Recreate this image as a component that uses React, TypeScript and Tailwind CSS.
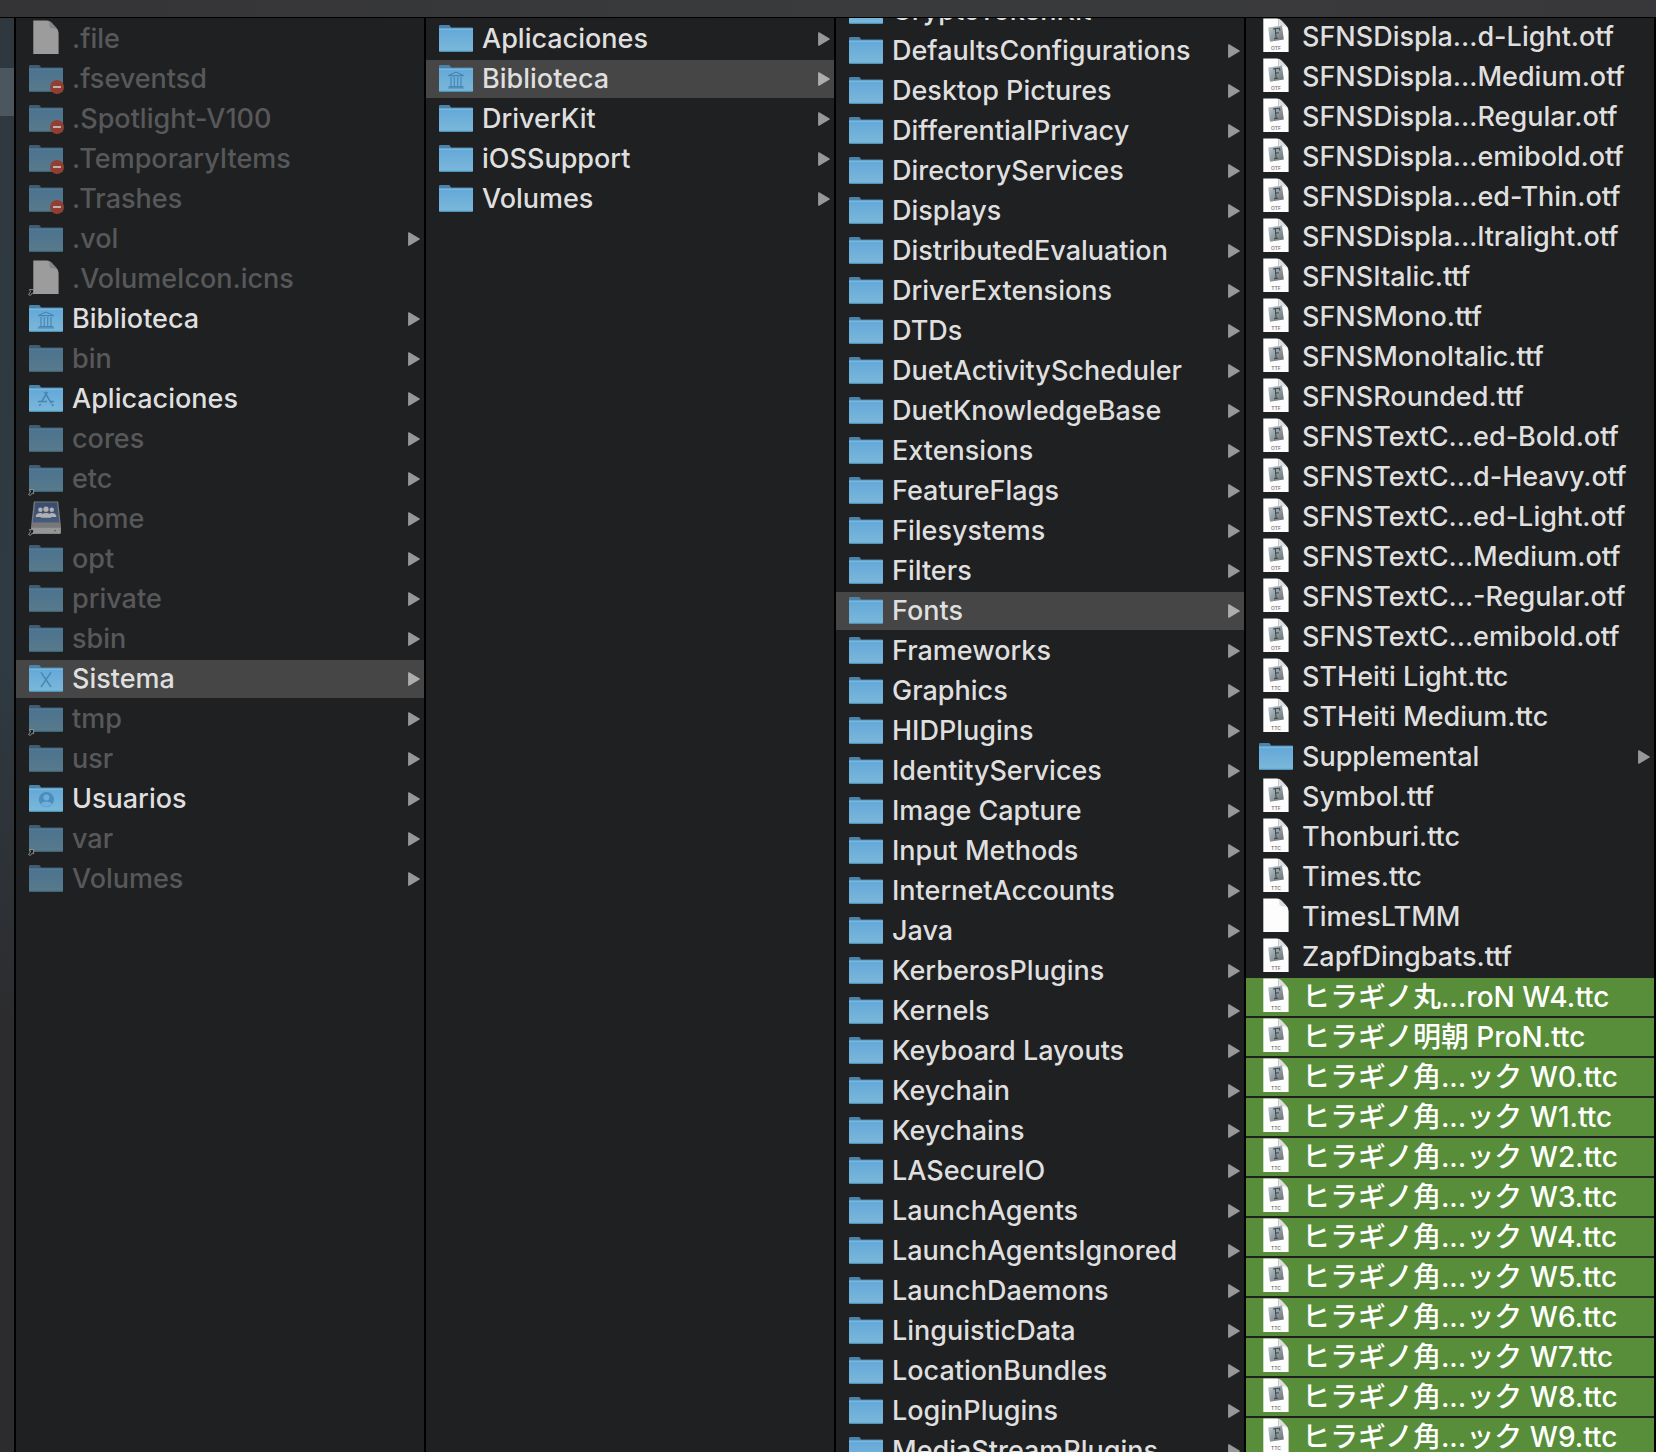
import React from "react";

type Kind =
  | "folder"
  | "library"
  | "apps"
  | "system"
  | "users"
  | "network"
  | "doc"
  | "otf"
  | "ttf"
  | "ttc";

type Item = {
  name: string;
  kind?: Kind;
  dim?: boolean;
  locked?: boolean;
  alias?: boolean;
  open?: boolean;
  tagged?: boolean;
};

const rootItems: Item[] = [
  { name: ".file", kind: "doc", dim: true },
  { name: ".fseventsd", dim: true, locked: true },
  { name: ".Spotlight-V100", dim: true, locked: true },
  { name: ".TemporaryItems", dim: true, locked: true },
  { name: ".Trashes", dim: true, locked: true },
  { name: ".vol", dim: true },
  { name: ".VolumeIcon.icns", kind: "doc", dim: true, alias: true },
  { name: "Biblioteca", kind: "library" },
  { name: "bin", dim: true },
  { name: "Aplicaciones", kind: "apps" },
  { name: "cores", dim: true },
  { name: "etc", dim: true, alias: true },
  { name: "home", kind: "network", dim: true, alias: true },
  { name: "opt", dim: true },
  { name: "private", dim: true },
  { name: "sbin", dim: true },
  { name: "Sistema", kind: "system", open: true },
  { name: "tmp", dim: true, alias: true },
  { name: "usr", dim: true },
  { name: "Usuarios", kind: "users" },
  { name: "var", dim: true, alias: true },
  { name: "Volumes", dim: true },
];

const systemItems: Item[] = [
  { name: "Aplicaciones" },
  { name: "Biblioteca", kind: "library", open: true },
  { name: "DriverKit" },
  { name: "iOSSupport" },
  { name: "Volumes" },
];

const libraryItems: Item[] = [
  "CryptoTokenKit",
  "DefaultsConfigurations",
  "Desktop Pictures",
  "DifferentialPrivacy",
  "DirectoryServices",
  "Displays",
  "DistributedEvaluation",
  "DriverExtensions",
  "DTDs",
  "DuetActivityScheduler",
  "DuetKnowledgeBase",
  "Extensions",
  "FeatureFlags",
  "Filesystems",
  "Filters",
  "Fonts",
  "Frameworks",
  "Graphics",
  "HIDPlugins",
  "IdentityServices",
  "Image Capture",
  "Input Methods",
  "InternetAccounts",
  "Java",
  "KerberosPlugins",
  "Kernels",
  "Keyboard Layouts",
  "Keychain",
  "Keychains",
  "LASecureIO",
  "LaunchAgents",
  "LaunchAgentsIgnored",
  "LaunchDaemons",
  "LinguisticData",
  "LocationBundles",
  "LoginPlugins",
  "MediaStreamPlugins",
].map((name) => ({ name, open: name === "Fonts" }));

const fontItems: Item[] = [
  { name: "SFNSDispla...d-Light.otf", kind: "otf" },
  { name: "SFNSDispla...Medium.otf", kind: "otf" },
  { name: "SFNSDispla...Regular.otf", kind: "otf" },
  { name: "SFNSDispla...emibold.otf", kind: "otf" },
  { name: "SFNSDispla...ed-Thin.otf", kind: "otf" },
  { name: "SFNSDispla...ltralight.otf", kind: "otf" },
  { name: "SFNSItalic.ttf", kind: "ttf" },
  { name: "SFNSMono.ttf", kind: "ttf" },
  { name: "SFNSMonoItalic.ttf", kind: "ttf" },
  { name: "SFNSRounded.ttf", kind: "ttf" },
  { name: "SFNSTextC...ed-Bold.otf", kind: "otf" },
  { name: "SFNSTextC...d-Heavy.otf", kind: "otf" },
  { name: "SFNSTextC...ed-Light.otf", kind: "otf" },
  { name: "SFNSTextC...Medium.otf", kind: "otf" },
  { name: "SFNSTextC...-Regular.otf", kind: "otf" },
  { name: "SFNSTextC...emibold.otf", kind: "otf" },
  { name: "STHeiti Light.ttc", kind: "ttc" },
  { name: "STHeiti Medium.ttc", kind: "ttc" },
  { name: "Supplemental" },
  { name: "Symbol.ttf", kind: "ttf" },
  { name: "Thonburi.ttc", kind: "ttc" },
  { name: "Times.ttc", kind: "ttc" },
  { name: "TimesLTMM", kind: "doc" },
  { name: "ZapfDingbats.ttf", kind: "ttf" },
  { name: "ヒラギノ丸...roN W4.ttc", kind: "ttc", tagged: true },
  { name: "ヒラギノ明朝 ProN.ttc", kind: "ttc", tagged: true },
  { name: "ヒラギノ角...ック W0.ttc", kind: "ttc", tagged: true },
  { name: "ヒラギノ角...ック W1.ttc", kind: "ttc", tagged: true },
  { name: "ヒラギノ角...ック W2.ttc", kind: "ttc", tagged: true },
  { name: "ヒラギノ角...ック W3.ttc", kind: "ttc", tagged: true },
  { name: "ヒラギノ角...ック W4.ttc", kind: "ttc", tagged: true },
  { name: "ヒラギノ角...ック W5.ttc", kind: "ttc", tagged: true },
  { name: "ヒラギノ角...ック W6.ttc", kind: "ttc", tagged: true },
  { name: "ヒラギノ角...ック W7.ttc", kind: "ttc", tagged: true },
  { name: "ヒラギノ角...ック W8.ttc", kind: "ttc", tagged: true },
  { name: "ヒラギノ角...ック W9.ttc", kind: "ttc", tagged: true },
];

const Gradients = () => (
  <svg className="absolute size-0" aria-hidden="true">
    <defs>
      <linearGradient id="folderFront" x1="0" y1="0" x2="0" y2="1">
        <stop offset="0" stopColor="#63a8d8" />
        <stop offset="1" stopColor="#7cb9da" />
      </linearGradient>
      <linearGradient id="folderDim" x1="0" y1="0" x2="0" y2="1">
        <stop offset="0" stopColor="#4b7390" />
        <stop offset="1" stopColor="#587a8b" />
      </linearGradient>
      <linearGradient id="tile" x1="0" y1="0" x2="1" y2="1">
        <stop offset="0" stopColor="#c3d0d6" />
        <stop offset="0.5" stopColor="#939ea3" />
        <stop offset="1" stopColor="#646b6f" />
      </linearGradient>
      <linearGradient id="drive" x1="0" y1="0" x2="0" y2="1">
        <stop offset="0" stopColor="#466394" />
        <stop offset="1" stopColor="#5b7cb0" />
      </linearGradient>
    </defs>
  </svg>
);

const FolderShape = ({ dim }: { dim?: boolean }) => (
  <>
    <path
      d="M0 7V6.2Q0 5 1.2 5H9.6Q10.6 5 11.2 6L12 7.4H33Q34 7.4 34 8.4V12H0Z"
      fill={dim ? "#3f5c70" : "#4c83aa"}
    />
    <path
      d="M0 8.6H34V30.6Q34 32 32.6 32H1.4Q0 32 0 30.6Z"
      fill={dim ? "url(#folderDim)" : "url(#folderFront)"}
    />
    <path d="M0 9.2H34" stroke={dim ? "#5a8099" : "#82c0e6"} strokeWidth="1" />
    <path d="M0.6 31.4H33.4" stroke={dim ? "#40667b" : "#4f93b8"} strokeWidth="1.2" />
  </>
);

const DocShape = ({ dim }: { dim?: boolean }) => (
  <>
    <path
      d="M4.3 0.4H18Q20.6 0.6 22.6 2.8L27 7.4Q29.6 10 29.6 13V34H4.3Z"
      fill={dim ? "#9c9c9c" : "#fdfdfd"}
    />
    <path
      d="M18.6 0.6Q20.6 1.4 20.4 6.4Q20.8 8.4 23.4 8.2Q27.8 8.2 29.4 11.6Q29 9.6 27 7.4L22.6 2.8Q20.8 0.9 18.6 0.6Z"
      fill={dim ? "#868686" : "#dcdcdc"}
    />
  </>
);

const ItemIcon = ({ kind = "folder", dim, locked, alias }: Partial<Item>) => {
  const isFont = kind === "otf" || kind === "ttf" || kind === "ttc";
  return (
    <svg width="34" height="38" viewBox="0 0 34 38" className="shrink-0 overflow-visible" aria-hidden="true">
      {kind === "doc" || isFont ? <DocShape dim={dim} /> : kind === "network" ? null : <FolderShape dim={dim} />}
      {isFont && (
        <>
          <path d="M9.2 9.4L23 7.4L24.8 21.6L11 23.8Z" fill="url(#tile)" />
          <path d="M19.5 1.2V10" stroke="#b4bbbf" strokeWidth="0.8" />
          <path
            d="M14 11L20.6 10.2L20.8 12.6M16.2 10.8L17.2 20.4M16.6 15.2L19.8 14.8M15 20.8L19 20.2"
            fill="none"
            stroke="#3c4246"
            strokeWidth="1"
          />
          <text x="17" y="32" textAnchor="middle" fontSize="5" fill="#6a6a6a" className="font-[Inter]">
            {kind.toUpperCase()}
          </text>
        </>
      )}
      {kind === "library" && (
        <g fill="none" stroke="#4785b2" strokeWidth="1.1">
          <path d="M9.4 15.6L17 12L24.6 15.6Z" />
          <path d="M12 17V26M15.3 17V26M18.7 17V26M22 17V26" />
          <path d="M9.8 26.6H24.2M8.6 28H25.4" />
        </g>
      )}
      {kind === "apps" && (
        <g fill="none" stroke="#4785b2" strokeWidth="1.5">
          <path d="M15.6 12L22.4 23.4M18.4 12L12.4 22M11.6 23.8L10.4 26M23 24L24.2 26" />
          <path d="M9 21.6H18M21.4 21.6H25" />
        </g>
      )}
      {kind === "system" && (
        <path d="M12 12.4L22 27M22 12.4L12 27" fill="none" stroke="#4785b2" strokeWidth="1.4" />
      )}
      {kind === "users" && (
        <>
          <circle cx="17.4" cy="19.6" r="7.6" fill="#4b8dbd" />
          <circle cx="17.4" cy="17.6" r="3" fill="#6dafd9" />
          <path d="M11.6 24.2Q13 21.6 17.4 21.6Q21.8 21.6 23.2 24.2Q21 27 17.4 27Q13.8 27 11.6 24.2Z" fill="#6dafd9" />
        </>
      )}
      {kind === "network" && (
        <g opacity="0.65">
          <path d="M4.8 1.4H29.2L32 27V32.4Q32 34 30.4 34H3.6Q2 34 2 32.4V27Z" fill="#a8a8aa" />
          <path d="M6.2 2.4H28L30.4 22.6H3.8Z" fill="url(#drive)" />
          <path d="M2.4 27.8H31.6V32.4Q31.6 33.6 30.4 33.6H3.6Q2.4 33.6 2.4 32.4Z" fill="#d5d5d5" />
          <path d="M25 30.6H27" stroke="#58b358" strokeWidth="1.4" />
          <g fill="#fff">
            <circle cx="11.4" cy="9.8" r="2.2" />
            <circle cx="22.8" cy="9.8" r="2.2" />
            <path d="M6.6 17Q6.8 13 11.4 13Q13 13 14 14.4L12 17ZM27.4 17Q27.2 13 22.8 13Q21 13 20 14.4L22 17Z" />
            <circle cx="17" cy="9.2" r="2.6" />
            <path d="M11.8 17.8Q12 13 17 13Q22 13 22.2 17.8Z" />
          </g>
        </g>
      )}
      {locked && (
        <>
          <circle cx="28" cy="27" r="7" fill="#923f32" />
          <path d="M24 27H32" stroke="#bdb0ae" strokeWidth="2" />
        </>
      )}
      {alias && (
        <>
          <path d="M0.4 29.6H4.6V33.8L3.4 33L1.4 35.4L-0.4 34.6L1.6 31.6Z" fill="#16171a" stroke="#a8a8a8" strokeWidth="0.8" />
        </>
      )}
    </svg>
  );
};

const Row = ({ item }: { item: Item }) => {
  const { name, kind = "folder", dim, open, tagged } = item;
  const isFolder = !["doc", "otf", "ttf", "ttc"].includes(kind) && !item.locked;
  const bg = open ? "bg-[#464646]" : tagged ? "bg-[#588d39]" : "";
  const color = tagged ? "text-[28px] text-white" : dim ? "text-[#58585a]" : "text-[#dfdfdf]";
  return (
    <li>
      <button type="button" className={`flex h-[38px] w-full items-center gap-[9px] pr-1 pl-[13px] text-left ${bg}`}>
        <ItemIcon {...item} />
        <span className={`min-w-0 flex-1 whitespace-nowrap ${color}`}>{name}</span>
        {isFolder && (
          <svg width="12" height="14" viewBox="0 0 12 14" className="shrink-0" aria-hidden="true">
            <path
              d="M0.8 0.9L11.2 7L0.8 13.1Z"
              fill={open ? "#aeaeae" : "#98989a"}
              stroke={open ? "#aeaeae" : "#98989a"}
              strokeWidth="1.4"
              strokeLinejoin="round"
            />
          </svg>
        )}
      </button>
    </li>
  );
};

const Column = ({ items, scroll }: { items: Item[]; scroll: string }) => (
  <section className="min-w-0 flex-1 overflow-hidden border-r-2 border-black bg-[#1f2022]">
    <ul className={`flex flex-col gap-0.5 ${scroll}`}>
      {items.map((item) => (
        <Row key={item.name} item={item} />
      ))}
    </ul>
  </section>
);

const App = () => {
  return (
    <div className="flex h-screen flex-col overflow-hidden bg-[#1f2022] font-[Inter,'Noto_Sans_CJK_JP',sans-serif] text-[27px] leading-[36px] font-medium">
      <Gradients />
      <header className="h-[18px] shrink-0 border-b border-black bg-linear-to-r from-[#343436] via-[#3a3b3d] to-[#38383a]" />
      <main className="flex min-h-0 flex-1">
        <aside className="flex w-4 shrink-0 flex-col border-r-2 border-black bg-linear-to-b from-[#2f383e] via-[#2f3a42] via-45% to-[#2c2c2e] to-70% pt-[50px]">
          <div className="h-12 bg-[#4c565e]" />
        </aside>
        <Column items={rootItems} scroll="mt-0.5" />
        <Column items={systemItems} scroll="mt-0.5" />
        <Column items={libraryItems} scroll="-mt-[26px]" />
        <Column items={fontItems} scroll="mt-0" />
      </main>
    </div>
  );
};

export default App;
